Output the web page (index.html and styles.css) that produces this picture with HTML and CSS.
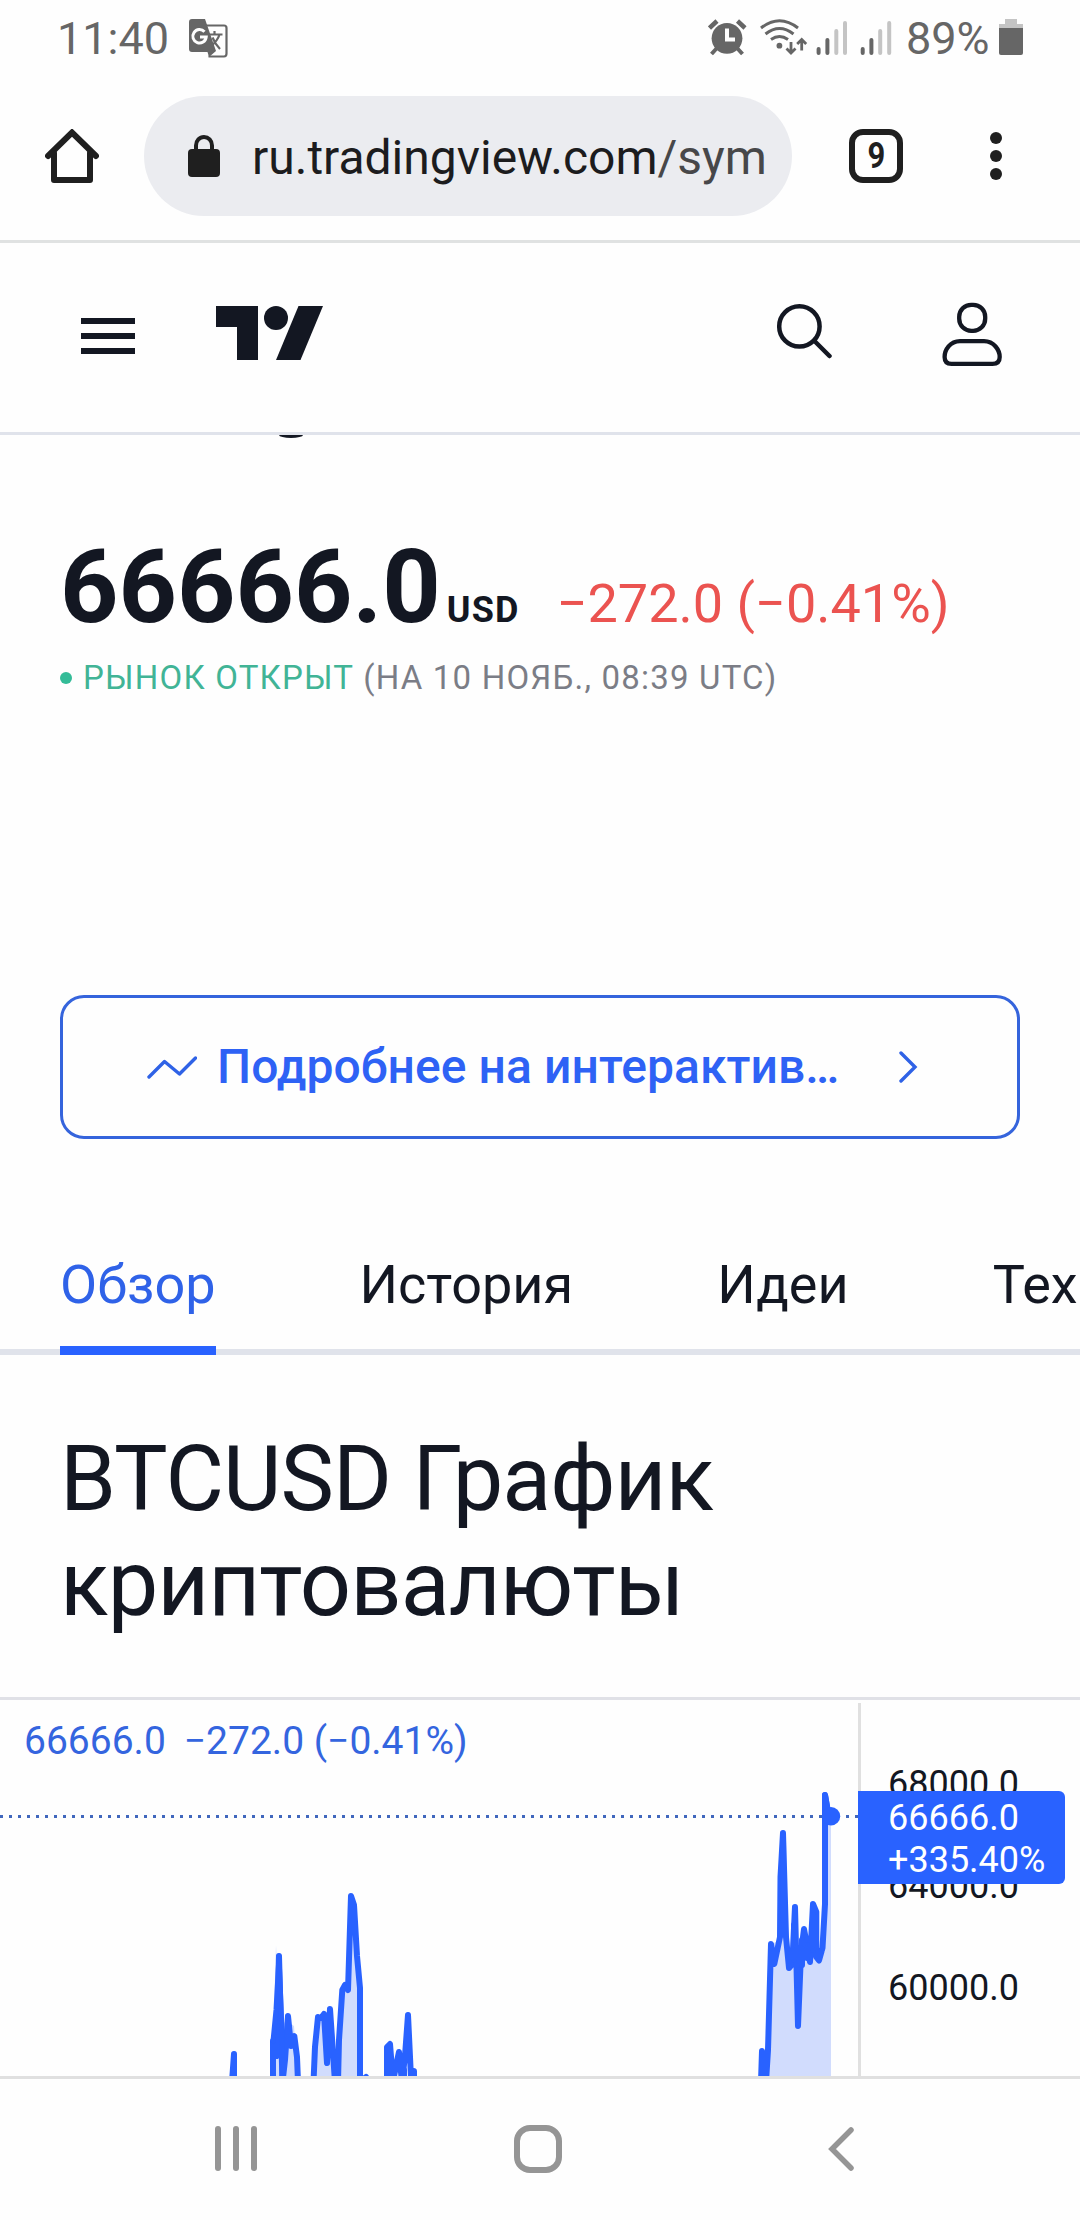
FILE: index.html
```html
<!DOCTYPE html>
<html lang="ru">
<head>
<meta charset="utf-8">
<title>BTCUSD</title>
<link rel="stylesheet" href="styles.css">
</head>
<body>
<div class="statusbar">
  <span class="clock">11:40</span>
  <svg class="translate" width="39" height="39" viewBox="0 0 39 39">
    <path d="M16 6.500H35Q37.500 6.500 37.500 9V34.500Q37.500 37.500 35 37.500H19.500" fill="none" stroke="#666" stroke-width="2.200"/>
    <path d="M3 0H16L27 32L20 38L18.500 33H3Q0 33 0 30V3Q0 0 3 0Z" fill="#666"/>
    <path d="M15.500 12.800A6.700 6.700 0 1 0 17.200 18H11" fill="none" stroke="#fefefe" stroke-width="3"/>
    <path d="M20 15.500H33.500M25.500 12V15.500M30.500 15.500Q28.500 22 22 27M23.500 18.500Q26 25 31 30" fill="none" stroke="#666" stroke-width="2.200"/>
  </svg>
  <svg class="phone-state" width="184" height="38" viewBox="708 18 184 38">
    <g fill="none" stroke="#666">
      <path d="M709.500 28L717 21M745 28L737.500 21" stroke-width="4.500"/>
      <path d="M717 48L711.500 54M737 48L742.500 54" stroke-width="4"/>
      <path d="M761 28Q779.500 13.500 798 28M765.500 34Q779.500 23 793.500 34M771 39.500Q779.500 33.500 788 39.500" stroke-width="3"/>
      <path d="M791 42V52M786.500 48.500L791 53L795.500 48.500M801.700 50.500V40M797.200 44L801.700 39.500L806.200 44" stroke-width="2.800"/>
    </g>
    <circle cx="727" cy="38.300" r="15.400" fill="#666"/>
    <path d="M727 28.500V39.500H735" fill="none" stroke="#fefefe" stroke-width="4"/>
    <circle cx="779.400" cy="45.700" r="2.900" fill="#666"/>
    <g stroke="#666" stroke-width="4" stroke-linecap="round">
      <path d="M818.600 49V53M827.400 40V53M862.700 49V53M871.400 40V53"/>
      <path d="M836.300 31V53M845 23V53M880.200 31V53M889.200 23V53" stroke="#c4c4c4"/>
    </g>
  </svg>
  <span class="battery-level">89%</span>
  <svg class="battery" width="24" height="36" viewBox="0 0 24 36">
    <path d="M6 0H18V5H24V9H0V5H6Z" fill="#c4c4c4"/>
    <path d="M0 9H24V34Q24 36 22 36H2Q0 36 0 34Z" fill="#666"/>
  </svg>
</div>

<div class="browser">
  <svg class="home" width="54" height="54" viewBox="0 0 54 54" fill="none" stroke="#1f1f1f" stroke-width="6" stroke-linejoin="round" stroke-linecap="round">
    <path d="M3 27L27 3.500L51 27" stroke-linejoin="miter"/>
    <path d="M9 24V51H45V24"/>
  </svg>
  <div class="omnibox">
    <svg width="32" height="42" viewBox="0 0 32 42">
      <rect y="14" width="32" height="28" rx="4" fill="#1f1f1f"/>
      <path d="M8 16V10.500A8 8.500 0 0 1 24 10.500V16" fill="none" stroke="#1f1f1f" stroke-width="4"/>
    </svg>
    <span class="url">ru.tradingview.com<span class="path">/sym</span></span>
  </div>
  <div class="tab-count"><span>9</span></div>
  <div class="more"><i></i><i></i><i></i></div>
</div>

<header class="site-header">
  <div class="burger"><i></i><i></i><i></i></div>
  <svg class="logo" width="107" height="54" viewBox="0 0 107 54" fill="#131722">
    <path d="M0 0H42V54H21V21H0Z"/>
    <circle cx="60" cy="12" r="12"/>
    <path d="M82.500 0H107L84.500 54H60Z"/>
  </svg>
  <svg class="search" width="56" height="56" viewBox="776 303 56 56" fill="none" stroke="#131722" stroke-width="4.500" stroke-linecap="round">
    <circle cx="799.400" cy="326.400" r="20.200"/>
    <path d="M815 341.500L829.500 356"/>
  </svg>
  <svg class="user" width="60" height="66" viewBox="942 301 60 66" fill="none" stroke="#131722" stroke-width="4.300">
    <rect x="959.200" y="304.800" width="26" height="26" rx="12"/>
    <path d="M960 341.200H984C994 341.200 999.700 350 999.700 357Q999.700 363.900 992.500 363.900H951.500Q944.600 363.900 944.600 357C944.600 350 950 341.200 960 341.200Z"/>
  </svg>
</header>

<main>
  <div class="title-tail"></div>
  <section class="quote">
    <div class="price-row">
      <span class="price">66666.0</span><span class="currency">USD</span><span class="change">−272.0 (−0.41%)</span>
    </div>
    <div class="market"><i></i><span class="open">РЫНОК ОТКРЫТ</span><span class="asof">(НА 10 НОЯБ., 08:39 UTC)</span></div>
  </section>

  <a class="chart-link">
    <svg width="50" height="26" viewBox="147 1054 50 26" fill="none" stroke="#2f62e6" stroke-width="3.400" stroke-linecap="round" stroke-linejoin="round">
      <path d="M149 1077L164.500 1061.500L179.500 1074L195.500 1058"/>
    </svg>
    <span class="chart-link-text">Подробнее на интерактив…</span>
    <svg width="20" height="32" viewBox="898 1051 20 32" fill="none" stroke="#2f62e6" stroke-width="3.400" stroke-linecap="round">
      <path d="M901 1053L915 1067L901 1081"/>
    </svg>
  </a>

  <nav class="tabs">
    <a class="tab active">Обзор</a><a class="tab">История</a><a class="tab">Идеи</a><a class="tab">Тех</a>
  </nav>

  <h2>BTCUSD График<br>криптовалюты</h2>

  <section class="chart">
    <div class="pane">
      <svg class="plot" width="858" height="376" viewBox="0 1700 858 376">
        <g fill="#d1dcfd">
          <path d="M273 2080V2040L276 1945L280 2030L286 2020L294 2026L298 2080Z"/>
          <path d="M313 2080L318 2016L330 2013L336 2080Z"/>
          <path d="M339 2080L342 1990L348 1989L353 1905L360 1988V2080Z"/>
          <path d="M768 2080L771 1945L779 1940L784 1880L789 1960L831 1950V1817V2080Z"/>
          <path d="M825 1955V1816H831V2080H780V1960Z"/>
        </g>
        <g fill="none" stroke="#2962ff" stroke-width="6" stroke-linejoin="round" stroke-linecap="round">
          <path d="M232 2082L234 2054V2082"/>
          <path d="M273 2082V2041L277 2056L279 1956L282.500 2082L285 2060L288 2016L291 2046L294.300 2036L297 2057L298 2082"/>
          <path d="M273 2041L276 2010L279 1956L282 2030V2082" stroke-width="5"/>
          <path d="M313.500 2082L315 2047L318 2017L321 2018L324 2014L327 2063L330 2009L335 2082H338L339 2040L342.300 1990L345 1985L348 1990L351 1896L354 1905L357 1956L360 1988V2082L366 2077"/>
          <path d="M387 2082V2047L390 2044L393 2082L396 2066L399 2052L402 2082L405 2056L408 2015L411 2078L414 2071V2082"/>
          <path d="M389 2055V2082M404 2070V2082M411 2072V2082"/>
          <path d="M761 2082L762 2051L766 2082L768 2050L771 1944L774.300 1964L780 1937L780.500 1877L783 1833L786 1937L789 1968L792.300 1964L795 1907L798 2026L801 1953L804 1929L810 1962L813 1904L816.300 1912V1957L819 1960.500L822.500 1948L825 1904V1795L828 1812"/>
          <path d="M783 1840L783.500 1920M794 1925V1960M798 1970V1985M802 1940V1965M807 1945V1958M813 1915V1950M828 1811L831 1816"/>
        </g>
        <path d="M0 1816.500H858" stroke="#4067bd" stroke-width="3" stroke-dasharray="3 6"/>
        <path d="M825 1795L828 1812" fill="none" stroke="#2962ff" stroke-width="6" stroke-linecap="round"/>
        <circle cx="831" cy="1816.300" r="9.200" fill="#2962ff"/>
      </svg>
      <div class="legend"><span>66666.0</span><span>−272.0 (−0.41%)</span></div>
    </div>
    <div class="axis">
      <span>68000.0</span><span>64000.0</span><span>60000.0</span>
      <div class="tag">66666.0<br>+335.40%</div>
    </div>
  </section>
</main>

<div class="system-nav">
  <div class="recents"><i></i><i></i><i></i></div>
  <div class="home-key"></div>
  <svg class="back" width="28" height="48" viewBox="0 0 28 48" fill="none" stroke="#959595" stroke-width="5.500" stroke-linecap="round">
    <path d="M24 5L5 24L24 43"/>
  </svg>
</div>
</body>
</html>
```
FILE: styles.css
```css
* { box-sizing: border-box; }
body {
  margin: 0;
  width: 1080px;
  height: 2220px;
  overflow: hidden;
  background: #fefefe;
  color: #131722;
  font-family: Roboto, sans-serif;
  display: flex;
  flex-direction: column;
}
svg { display: block; flex: none; }
a, span { white-space: nowrap; }

.statusbar {
  height: 77px;
  flex: none;
  display: flex;
  align-items: center;
  padding-left: 57px;
  color: #666;
  font-size: 45px;
  line-height: 77px;
}
.clock { width: 132px; }
.phone-state { margin: 0 14px 3px 480px; }
.battery-level { width: 93px; }
.battery { margin-bottom: 3px; }

.browser {
  height: 166px;
  flex: none;
  display: flex;
  align-items: center;
  padding: 0 0 5px 45px;
  border-bottom: 3px solid #e0e2e2;
}
.omnibox {
  width: 648px;
  height: 120px;
  margin-left: 45px;
  padding-left: 44px;
  border-radius: 60px;
  background: #ebecf0;
  display: flex;
  align-items: center;
}
.url {
  margin: 3px 0 0 32px;
  font-size: 48px;
  color: #1c1c1e;
}
.path { color: #474749; }
.tab-count {
  width: 54px;
  height: 54px;
  margin-left: 57px;
  border: 6px solid #1f1f1f;
  border-radius: 14px;
  display: flex;
  align-items: center;
  justify-content: center;
  font-size: 36px;
  font-weight: 700;
  line-height: 42px;
  color: #1f1f1f;
}
.tab-count span { transform: scaleX(.86); }
.more {
  margin-left: 87px;
  display: flex;
  flex-direction: column;
  gap: 6px;
}
.more i { width: 12px; height: 12px; border-radius: 50%; background: #1f1f1f; }

.site-header {
  height: 192px;
  flex: none;
  display: flex;
  align-items: flex-start;
  padding-left: 81px;
  border-bottom: 3px solid #e0e3eb;
}
.burger {
  width: 54px;
  margin-top: 75px;
  display: flex;
  flex-direction: column;
  gap: 9px;
}
.burger i { height: 6px; background: #131722; }
.logo { margin: 63px 0 0 81px; }
.search { margin: 60px 0 0 453px; }
.user { margin: 58px 0 0 110px; }

main { height: 1641px; flex: none; overflow: hidden; }
.title-tail {
  width: 24px;
  height: 3px;
  margin-left: 279px;
  background: #131722;
  border-radius: 0 0 12px 12px / 0 0 3px 3px;
}
.quote { padding: 98px 0 0 60px; height: 557px; }
.price-row { display: flex; align-items: baseline; line-height: 102px; }
.price { font-size: 102px; font-weight: 700; }
.currency { margin-left: 6px; font-size: 36px; font-weight: 700; letter-spacing: 1.2px; }
.change { margin-left: 37px; font-size: 54px; color: #eb5350; }
.market {
  margin-top: -4px;
  display: flex;
  align-items: center;
  font-size: 33px;
  line-height: 42px;
  letter-spacing: 1.2px;
}
.market i { width: 12px; height: 12px; border-radius: 50%; background: #34bc98; }
.open { margin-left: 11px; color: #41b496; }
.asof { margin-left: 9px; color: #7b7d86; }

.chart-link {
  width: 960px;
  height: 144px;
  margin: 0 60px;
  padding-left: 84px;
  border: 3px solid #3564dc;
  border-radius: 24px;
  display: flex;
  align-items: center;
  color: #2e62f5;
  font-size: 48px;
  font-weight: 500;
}
.chart-link-text { width: 681px; margin: 0 0 2px 20px; letter-spacing: .08px; }

.tabs {
  height: 136px;
  margin-top: 80px;
  padding-left: 60px;
  display: flex;
  gap: 144px;
  font-size: 54px;
  line-height: 132px;
  border-bottom: 6px solid #e0e3eb;
}
.tab { height: 136px; flex: none; }
.active { color: #2f62e8; border-bottom: 9px solid #2962ff; }

h2 {
  margin: 72px 0 0 60px;
  height: 270px;
  font-size: 90px;
  line-height: 105px;
  font-weight: 400;
  letter-spacing: -.94px;
}

.chart {
  height: 379px;
  border-top: 3px solid #e0e1e7;
  display: flex;
}
.pane { width: 858px; height: 376px; position: relative; }
.legend {
  position: absolute;
  left: 24px;
  top: 18px;
  display: flex;
  gap: 18px;
  font-size: 39px;
  line-height: 46px;
  color: #3465df;
}
.axis {
  position: relative;
  width: 222px;
  margin-top: 3px;
  padding: 30px 0 0 27px;
  border-left: 3px solid #e0e0e0;
  display: flex;
  flex-direction: column;
  font-size: 36px;
  line-height: 102px;
}
.tag {
  position: absolute;
  left: -3px;
  top: 88px;
  width: 207px;
  height: 93px;
  padding: 6px 0 0 30px;
  background: #2962ff;
  border-radius: 0 6px 6px 0;
  color: #fff;
  line-height: 42px;
}

.system-nav {
  height: 144px;
  flex: none;
  border-top: 3px solid #e0e0e0;
  padding: 0 0 2px 215px;
  display: flex;
  align-items: center;
}
.recents { display: flex; gap: 12px; }
.recents i { width: 6px; height: 45px; border-radius: 3px; background: #959595; }
.home-key {
  width: 48px;
  height: 48px;
  margin-left: 257px;
  border: 6px solid #959595;
  border-radius: 16px;
}
.back { margin-left: 265px; }
```
